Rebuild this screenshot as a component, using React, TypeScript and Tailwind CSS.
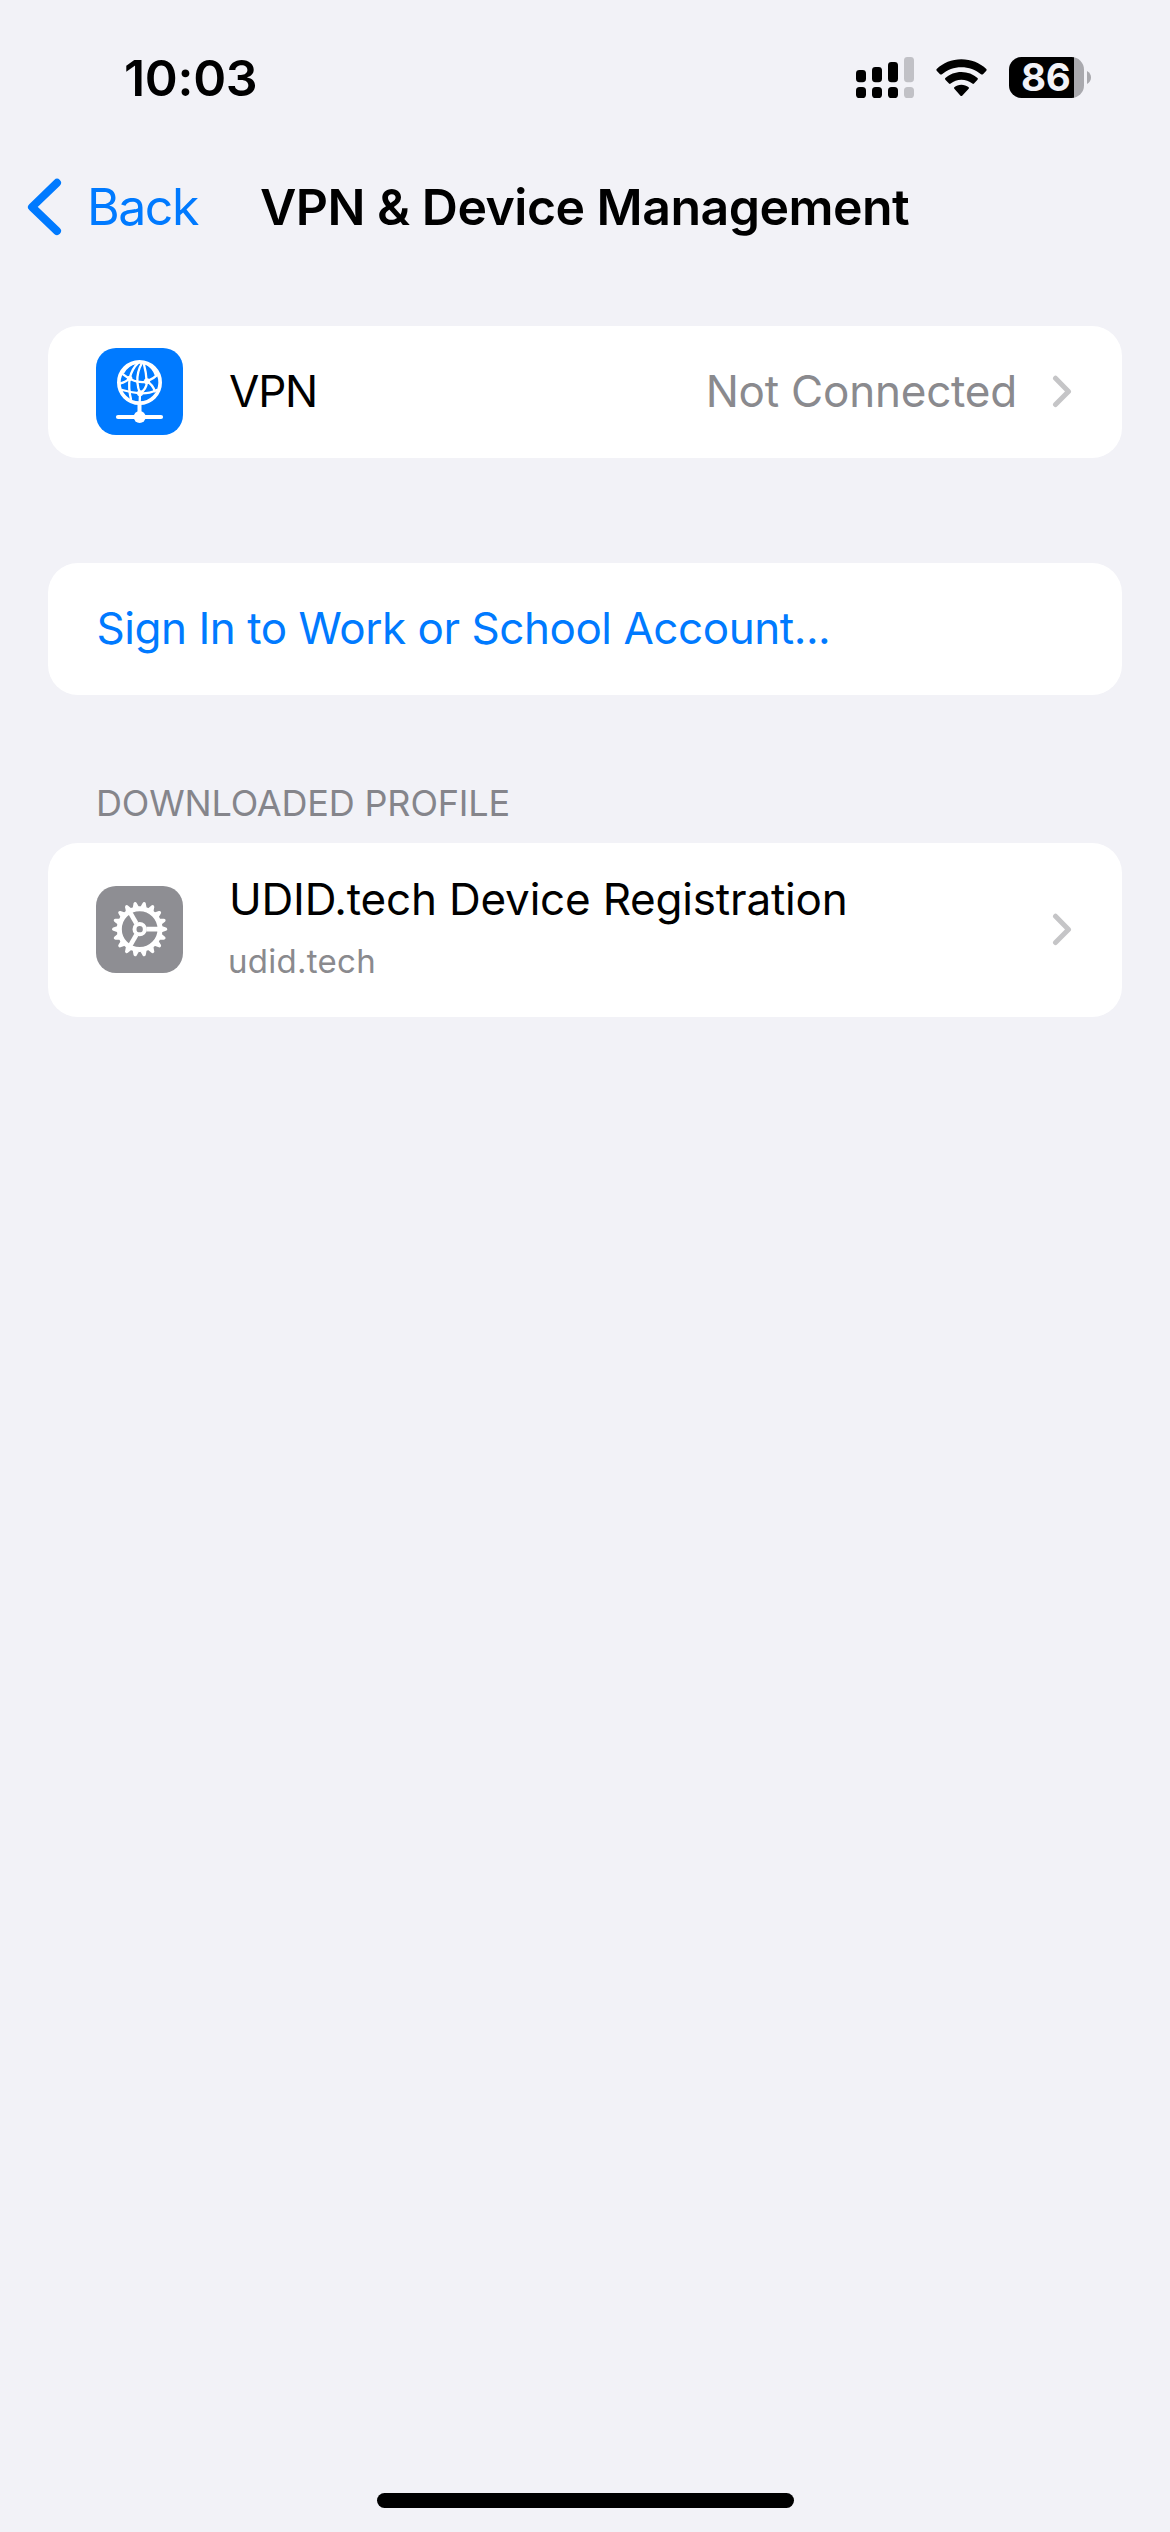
const TEETH = Array.from({ length: 18 }, (_, i) => i * 20);

function SignalIcon() {
  return (
    <svg className="h-[41px] w-[58px] shrink-0" viewBox="0 0 58 41">
      <rect x="0" y="13" width="10" height="12.2" rx="3.4" />
      <rect x="16" y="10" width="10" height="15.2" rx="3.4" />
      <rect x="32" y="5" width="10" height="20.2" rx="3.4" />
      <rect x="48" y="0" width="10" height="25.2" rx="3.4" fill="#c1c1c6" />
      <rect x="0" y="30" width="10" height="11" rx="3.6" />
      <rect x="16" y="30" width="10" height="11" rx="3.6" />
      <rect x="32" y="30" width="10" height="11" rx="3.6" />
      <rect x="48" y="30" width="10" height="11" rx="3.6" fill="#c1c1c6" />
    </svg>
  );
}

function WifiIcon() {
  return (
    <svg className="mr-[21px] ml-[22px] h-[38px] w-[52px] shrink-0" viewBox="288 56 156 114">
      <path d="M364 57C335 57 309 68 290 86Q288 88.500 290 91L300 101.500Q303 104 306 101.500C322 88 342 80.500 364 80.500S407 88 423 101.500Q426 104 429 101.500L439 91Q441 88.500 439 86C420 68 393 57 364 57Z" />
      <path d="M364 95C346 95 329 102 316 113Q314 115.500 316 118L327 129.500Q329.500 132 332 129.500C341 122 352 118 364 118S388 122 397 129.500Q399.500 132 402 129.500L412.500 118Q415 115.500 412.500 113C399 102 383 95 364 95Z" />
      <path d="M364 133C356 133 348 136 343 140.500Q340.500 143 343 145.500L361.500 166Q364 168.500 366.500 166L386 145.500Q388 143 386 140.500C380 136 372 133 364 133Z" />
    </svg>
  );
}

function Battery() {
  return (
    <div className="flex items-center gap-[3px]">
      <div className="h-[41px] w-[75px] rounded-[12.5px] bg-[linear-gradient(to_right,#000_65px,#a9a9ae_65px)] pl-[12px] text-[38.5px] leading-[41px] font-bold tracking-[-0.3px] text-[#f2f2f7]">
        86
      </div>
      <svg className="h-[13px] w-[4px]" viewBox="0 0 4 13">
        <path d="M0 0C2.600 1.300 4 3.800 4 6.500S2.600 11.700 0 13Z" fill="#a9a9ae" />
      </svg>
    </div>
  );
}

function Chevron() {
  return (
    <svg className="mb-[2px] h-[33px] w-[20px] shrink-0" viewBox="0 0 20 33" fill="none">
      <path d="M3.5 3.200L16.500 16.500L3.500 29.600" stroke="#c5c5c7" strokeWidth="5" strokeLinecap="round" strokeLinejoin="round" />
    </svg>
  );
}

function VpnIcon() {
  return (
    <svg className="mb-px size-[87px] shrink-0 rounded-[20px] bg-[#007aff]" viewBox="48 54 261 261" fill="none" stroke="#fff" strokeLinecap="round">
      <circle cx="178.500" cy="157.500" r="62" strokeWidth="11" />
      <g strokeWidth="7">
        <path d="M176 97C162 110 153 127 149 145C146 165 147 184 153 208" />
        <path d="M186 99C176 116 171 135 172 156C173 168 176 180 180 190L179 218" />
        <path d="M191 99C195 114 199 132 200 154" />
        <path d="M194 98C210 106 222 118 228 136" />
        <path d="M167 98C152 103 138 112 130 127" />
        <path d="M126 131C138 140 154 152 172 155C184 157 194 157 201 154C214 149 225 142 233 134" />
        <path d="M149 145C143 152 131 158 119 161" />
        <path d="M127 180C145 185 163 188 180 190C198 191 214 188 230 180" />
        <path d="M201 154C200 170 193 182 180 190" />
        <path d="M201 154C214 162 221 172 224 184" />
      </g>
      <g fill="#fff" stroke="none">
        <circle cx="149" cy="145" r="8" />
        <circle cx="201" cy="154" r="9" />
        <circle cx="180" cy="190" r="9" />
        <circle cx="179" cy="261" r="18" />
      </g>
      <path d="M178.500 222V250" strokeWidth="12" />
      <path d="M114 261H243" strokeWidth="12.500" />
    </svg>
  );
}

function GearIcon() {
  return (
    <svg className="mb-px size-[87px] shrink-0 rounded-[20px] bg-[#8e8e93]" viewBox="48 48 261 261" fill="none" stroke="#fff">
      <g transform="translate(179 177.500)">
        <circle r="61" strokeWidth="15" />
        {TEETH.map((a) => (
          <path key={a} transform={`rotate(${a})`} d="M66 -9.500L79 -4.800Q82.500 -3.500 82.500 0T79 4.800L66 9.500Z" fill="#fff" stroke="none" />
        ))}
        <circle r="15.500" strokeWidth="12" />
        <path d="M20 0H58" strokeWidth="14" />
        <path d="M20 0H58" strokeWidth="14" transform="rotate(120)" />
        <path d="M20 0H58" strokeWidth="14" transform="rotate(240)" />
      </g>
    </svg>
  );
}

export default function App() {
  return (
    <div className="flex h-[2532px] w-[1170px] flex-col bg-[#f2f2f7] font-[Inter,sans-serif] text-black antialiased">
      <header>
        <div className="flex h-[155px] items-center justify-between pr-[79px] pl-[124px]">
          <div className="pt-px text-[50px] leading-[60px] font-semibold tracking-[-0.3px]">10:03</div>
          <div className="flex items-center">
            <SignalIcon />
            <WifiIcon />
            <Battery />
          </div>
        </div>
        <nav className="flex h-[103px] items-center pl-[26px] text-[50px] leading-[60px]">
          <button className="flex w-[234px] items-center text-[#007aff]">
            <svg className="mr-[23px] h-[60px] w-[38px]" viewBox="0 0 38 60" fill="none">
              <path d="M31 5.800L6 30L31 54" stroke="#007aff" strokeWidth="8" strokeLinecap="round" strokeLinejoin="round" />
            </svg>
            <span className="tracking-[-1.47px]">Back</span>
          </button>
          <h1 className="font-semibold tracking-[-0.52px] whitespace-nowrap">VPN &amp; Device Management</h1>
        </nav>
      </header>

      <main className="flex grow flex-col px-12 pt-[68px] text-[44px] leading-[54px]">
        <section className="flex h-[132px] items-center rounded-[30px] bg-white pr-[50px] pl-12">
          <VpnIcon />
          <span className="mb-[2px] ml-[46px] grow tracking-[-1.2px]">VPN</span>
          <span className="mr-[35px] mb-[2px] tracking-[-0.22px] text-[#8a8a8e]">Not Connected</span>
          <Chevron />
        </section>

        <section className="mt-[105px] flex h-[132px] items-center rounded-[30px] bg-white pl-[48.500px] text-[#007aff]">
          <span className="mb-[2px] tracking-[-0.46px]">Sign In to Work or School Account...</span>
        </section>

        <h2 className="mt-[86px] pl-12 text-[36px] leading-[44px] tracking-[-0.16px] text-[#85858b]">DOWNLOADED PROFILE</h2>

        <section className="mt-[18px] flex h-[174px] items-center rounded-[30px] bg-white pr-[50px] pl-12">
          <GearIcon />
          <div className="mb-[6px] ml-[46px] grow">
            <div className="tracking-[-0.2px]">UDID.tech Device Registration</div>
            <div className="-ml-px mt-[14px] text-[33px] leading-[42px] tracking-[0.28px] text-[#8a8a8e]">udid.tech</div>
          </div>
          <Chevron />
        </section>
      </main>

      <footer className="flex justify-center pb-6">
        <div className="h-[15px] w-[417px] rounded-full bg-black" />
      </footer>
    </div>
  );
}
